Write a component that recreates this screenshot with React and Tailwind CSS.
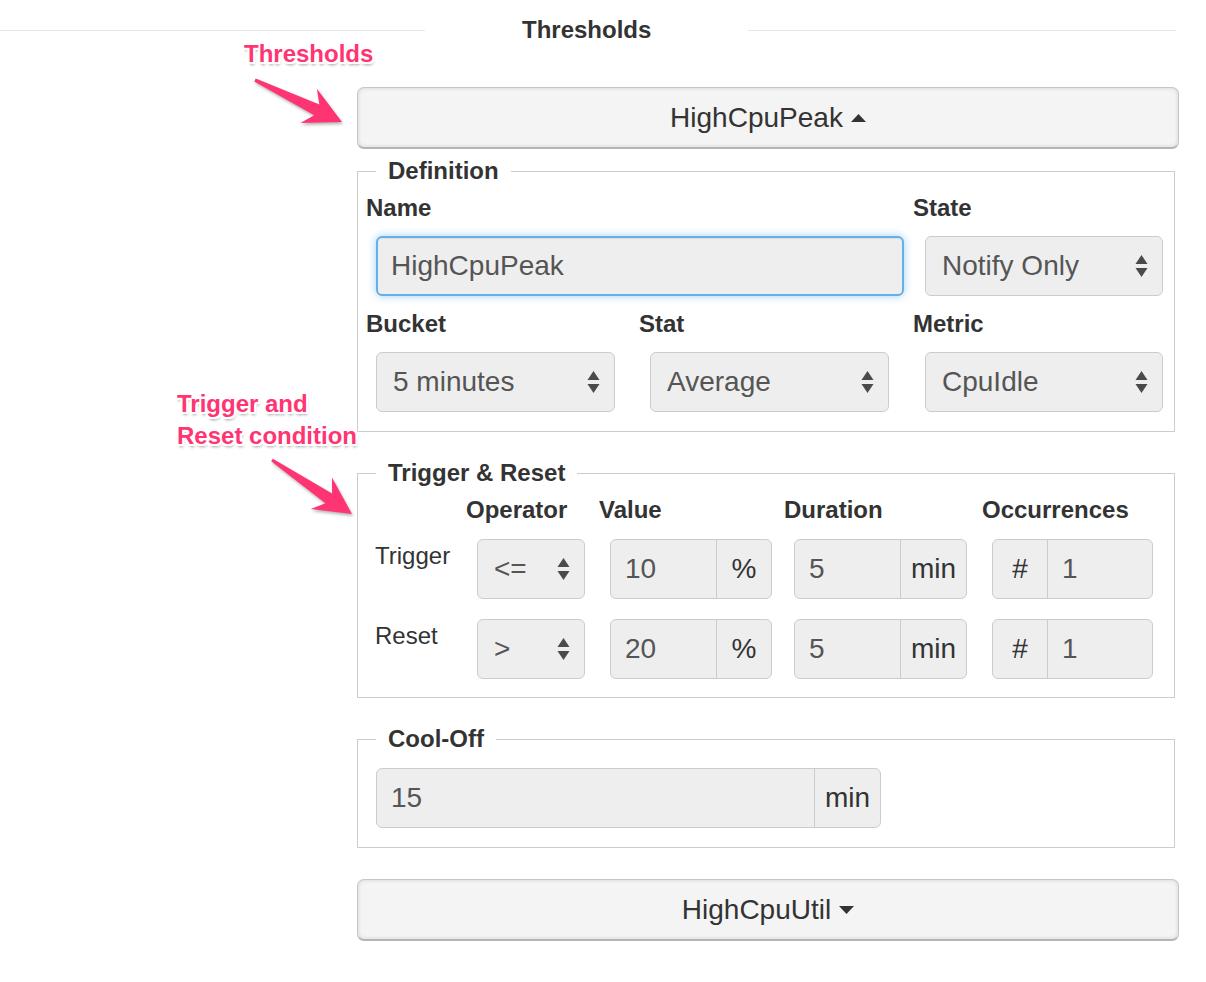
import React from "react";

const PINK = "#ff3473";

// arrow polygon, skitch style: thin tail, wider neck, triangular head
const arrowPoints = (x1, y1, x2, y2, headLen = 37, headHalf = 19) => {
  const dx = x2 - x1;
  const dy = y2 - y1;
  const len = Math.hypot(dx, dy);
  const ux = dx / len;
  const uy = dy / len;
  const nx = -uy;
  const ny = ux;
  const at = (back, side) => [x2 - ux * back + nx * side, y2 - uy * back + ny * side];
  const tail = (side) => [x1 + nx * side, y1 + ny * side];
  const pts = [
    tail(1.5),
    at(headLen - 9, 6),
    at(headLen, headHalf),
    [x2, y2],
    at(headLen, -headHalf),
    at(headLen - 9, -6),
    tail(-1.5),
  ];
  return pts.map((p) => p.map((v) => v.toFixed(1)).join(",")).join(" ");
};

const UpDown = () => (
  <svg width="13" height="24" viewBox="0 0 13 24" className="shrink-0">
    <path d="M6.5 1 L12.5 10 H0.5 Z" fill="#4a4a4a" />
    <path d="M0.5 14 H12.5 L6.5 23 Z" fill="#4a4a4a" />
  </svg>
);

const Select = ({ value, className = "" }) => (
  <div
    className={`flex h-[60px] items-center justify-between rounded-[6px] border border-[#cccccc] bg-[#eeeeee] pl-[16px] pr-[14px] text-[28px] text-[#555] ${className}`}
  >
    <span>{value}</span>
    <UpDown />
  </div>
);

const Addon = ({ children, className = "" }) => (
  <div className={`flex h-full items-center justify-center text-[#333] ${className}`}>{children}</div>
);

const Group = ({ value, unit, prefix, className = "", unitW = "w-[55px]" }) => (
  <div
    className={`flex h-[60px] items-stretch overflow-hidden rounded-[6px] border border-[#cccccc] bg-[#eeeeee] text-[28px] ${className}`}
  >
    {prefix && <Addon className={`${unitW} border-r border-[#cccccc]`}>{prefix}</Addon>}
    <input
      readOnly
      value={value}
      className="min-w-0 flex-1 bg-transparent pl-[14px] text-[#555] outline-none"
    />
    {unit && <Addon className={`${unitW} border-l border-[#cccccc]`}>{unit}</Addon>}
  </div>
);

const Fieldset = ({ title, className = "", children }) => (
  <fieldset className={`w-[818px] border border-[#cccccc] px-[8px] ${className}`}>
    <legend className="ml-[10px] px-[12px] text-[24px] font-bold leading-[28px] text-[#333]">
      {title}
    </legend>
    {children}
  </fieldset>
);

const Label = ({ children, className = "" }) => (
  <div className={`text-[24px] font-bold leading-[28px] text-[#333] ${className}`}>{children}</div>
);

const Toggle = ({ title, up, className = "" }) => (
  <button
    className={`flex h-[62px] w-[822px] items-center justify-center gap-[8px] rounded-[7px] border border-[#c6c6c6] border-b-2 border-b-[#b5b5b5] bg-[#f4f4f4] text-[28px] text-[#333] shadow-[inset_0_0_4px_rgba(0,0,0,0.14)] ${className}`}
  >
    <span>{title}</span>
    <svg width="15" height="8" viewBox="0 0 15 8">
      {up ? <path d="M7.5 0 L15 8 H0 Z" fill="#333" /> : <path d="M0 0 H15 L7.5 8 Z" fill="#333" />}
    </svg>
  </button>
);

const Row = ({ label, op, value, duration, count, className = "" }) => (
  <div className={`grid grid-cols-[100px_133px_185px_198px_1fr] ${className}`}>
    <div className="pl-[9px] pt-[3px] text-[24px] leading-[28px] text-[#333]">{label}</div>
    <Select value={op} className="ml-[11px] w-[108px]" />
    <Group value={value} unit="%" className="ml-[11px] w-[162px]" />
    <Group value={duration} unit="min" unitW="w-[66px]" className="ml-[10px] w-[173px]" />
    <Group value={count} prefix="#" className="ml-[10px] w-[161px]" />
  </div>
);

const annot = `text-[24px] font-bold leading-[32px] [text-shadow:-2px_0_0_#fff,2px_0_0_#fff,0_-2px_0_#fff,0_2px_0_#fff,-2px_-2px_0_#fff,2px_2px_0_#fff,2px_-2px_0_#fff,-2px_2px_0_#fff,1px_3px_3px_rgba(0,0,0,0.4)]`;

export default function App() {
  return (
    <div className="relative min-h-[982px] w-[1206px] bg-white font-['Liberation_Sans',Arial,sans-serif]">
      {/* header */}
      <div className="flex h-[60px] items-center pr-[30px]">
        <div className="h-px w-[425px] bg-[#e6e6e6]" />
        <h2 className="ml-[97px] text-[24px] font-bold text-[#333]">Thresholds</h2>
        <div className="ml-[97px] h-px flex-1 bg-[#e6e6e6]" />
      </div>

      <div className="ml-[357px] flex flex-col">
        <Toggle title="HighCpuPeak" up className="mt-[27px]" />

        <Fieldset title="Definition" className="mt-[8px] pb-[19px]">
          <div className="grid grid-cols-[273px_274px_1fr] pt-[9px]">
            <div className="col-span-2">
              <Label>Name</Label>
              <input
                readOnly
                value="HighCpuPeak"
                className="ml-[10px] mt-[14px] h-[60px] w-[528px] rounded-[6px] border-2 border-[#66afe9] bg-[#eeeeee] pl-[13px] text-[28px] text-[#555] shadow-[inset_0_1px_1px_rgba(0,0,0,0.075),0_0_8px_rgba(102,175,233,0.6)] outline-none"
              />
            </div>
            <div>
              <Label>State</Label>
              <Select value="Notify Only" className="ml-[12px] mt-[14px] w-[238px]" />
            </div>
            <div className="mt-[14px]">
              <Label>Bucket</Label>
              <Select value="5 minutes" className="ml-[10px] mt-[14px] w-[239px]" />
            </div>
            <div className="mt-[14px]">
              <Label>Stat</Label>
              <Select value="Average" className="ml-[11px] mt-[14px] w-[239px]" />
            </div>
            <div className="mt-[14px]">
              <Label>Metric</Label>
              <Select value="CpuIdle" className="ml-[12px] mt-[14px] w-[238px]" />
            </div>
          </div>
        </Fieldset>

        <Fieldset title="Trigger & Reset" className="mt-[27px] pb-[18px]">
          <div className="grid grid-cols-[100px_133px_185px_198px_1fr] pt-[9px]">
            <div />
            <Label>Operator</Label>
            <Label>Value</Label>
            <Label>Duration</Label>
            <Label>Occurrences</Label>
          </div>
          <Row label="Trigger" op="<=" value="10" duration="5" count="1" className="mt-[15px]" />
          <Row label="Reset" op=">" value="20" duration="5" count="1" className="mt-[20px]" />
        </Fieldset>

        <Fieldset title="Cool-Off" className="mt-[27px] pb-[19px]">
          <div className="pt-[15px]">
            <Group value="15" unit="min" unitW="w-[66px]" className="ml-[10px] w-[505px]" />
          </div>
        </Fieldset>

        <Toggle title="HighCpuUtil" className="mt-[31px]" />
      </div>

      {/* annotations */}
      <div className={`absolute left-[244px] top-[38px] ${annot}`} style={{ color: PINK }}>
        Thresholds
      </div>
      <div className={`absolute left-[177px] top-[388px] ${annot}`} style={{ color: PINK }}>
        <div>Trigger and</div>
        <div>Reset condition</div>
      </div>
      <svg
        width="1206"
        height="982"
        className="pointer-events-none absolute left-0 top-0 drop-shadow-[1px_2px_1.5px_rgba(0,0,0,0.3)]"
      >
        <polygon points={arrowPoints(255, 80, 342, 122)} fill={PINK} />
        <polygon points={arrowPoints(272, 460, 352, 514)} fill={PINK} />
      </svg>
    </div>
  );
}
